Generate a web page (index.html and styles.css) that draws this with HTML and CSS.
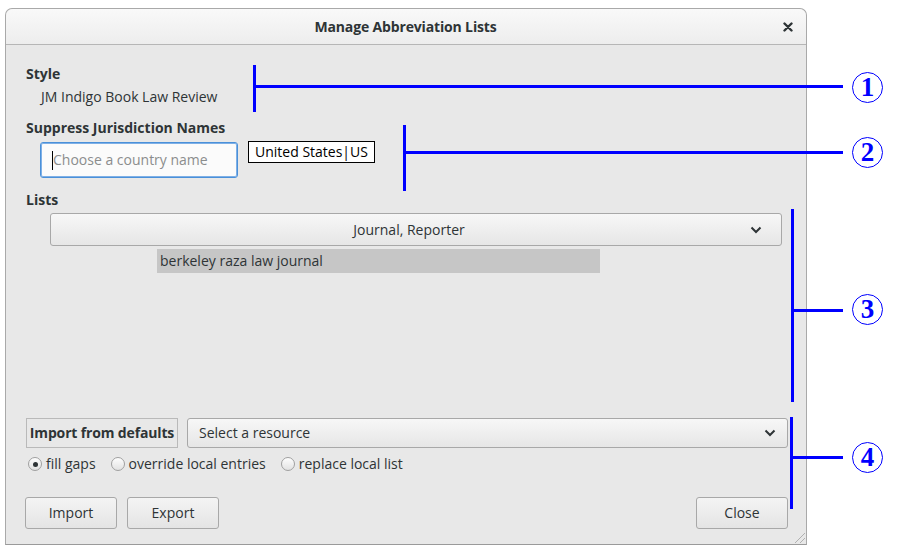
FILE: index.html
```html
<!DOCTYPE html>
<html>
<head>
<meta charset="utf-8">
<link rel="stylesheet" href="styles.css">
</head>
<body>
<div class="stage">
  <div class="dialog">
    <div class="titlebar">
      <span class="title">Manage Abbreviation Lists</span>
      <svg class="close" width="10" height="10" viewBox="0 0 10 10"><path d="M1.5 1.5 L8.5 8.5 M8.5 1.5 L1.5 8.5" stroke="#2e3436" stroke-width="2.4" stroke-linecap="round"/></svg>
    </div>
    <div class="content">
      <div class="label">Style</div>
      <div class="value">JM Indigo Book Law Review</div>
      <div class="label label-suppress">Suppress Jurisdiction Names</div>
      <div class="input-row">
        <div class="input"><span class="caret"></span><span class="placeholder">Choose a country name</span></div>
        <div class="tag">United States|US</div>
      </div>
      <div class="label label-lists">Lists</div>
      <div class="lists">
        <div class="dropdown">
          <span class="dd-text">Journal, Reporter</span>
          <svg class="chev" width="12" height="8" viewBox="0 0 12 8"><path d="M1.5 1.5 L6 6 L10.5 1.5" fill="none" stroke="#2e3436" stroke-width="2"/></svg>
        </div>
        <div class="list-item">berkeley raza law journal</div>
      </div>
      <div class="import-row">
        <div class="import-label">Import from defaults</div>
        <div class="select">
          <span>Select a resource</span>
          <svg class="chev" width="12" height="8" viewBox="0 0 12 8"><path d="M1.5 1.5 L6 6 L10.5 1.5" fill="none" stroke="#2e3436" stroke-width="2"/></svg>
        </div>
      </div>
      <div class="radio-row">
        <label class="radio"><span class="dot checked"></span>fill gaps</label>
        <label class="radio"><span class="dot"></span>override local entries</label>
        <label class="radio"><span class="dot"></span>replace local list</label>
      </div>
      <div class="button-row">
        <div class="btn">Import</div>
        <div class="btn">Export</div>
        <div class="spacer"></div>
        <div class="btn">Close</div>
      </div>
    </div>
    <svg class="grip" width="14" height="14" viewBox="0 0 14 14"><path d="M13 3 L3 13 M13 8 L8 13" stroke="#b0b0b0" stroke-width="1"/></svg>
  </div>

  <div class="ann a1-v"></div><div class="ann a1-h"></div><div class="num n1">1</div>
  <div class="ann a2-v"></div><div class="ann a2-h"></div><div class="num n2">2</div>
  <div class="ann a3-v"></div><div class="ann a3-h"></div><div class="num n3">3</div>
  <div class="ann a4-v"></div><div class="ann a4-h"></div><div class="num n4">4</div>
</div>
</body>
</html>
```
FILE: styles.css
```css
html, body {
  margin: 0;
  padding: 0;
  background: #ffffff;
}
body {
  font-family: "Open Sans", "Noto Sans", sans-serif;
  font-size: 14px;
  line-height: 18px;
  color: #2e3436;
}
.stage {
  position: relative;
  width: 900px;
  height: 558px;
  padding: 8px 0 0 5px;
  box-sizing: border-box;
}
.dialog {
  position: relative;
  width: 802px;
  height: 537px;
  box-sizing: border-box;
  border: 1px solid #a9a9a9;
  border-bottom-color: #9a9a9a;
  border-radius: 7px 7px 0 0;
  background: #e8e8e8;
  display: flex;
  flex-direction: column;
}
.titlebar {
  height: 35px;
  flex: none;
  border-bottom: 1px solid #b6b6b6;
  border-radius: 7px 7px 0 0;
  background: linear-gradient(#f9f9f9, #ededed);
  display: flex;
  align-items: center;
  justify-content: center;
  position: relative;
}
.title {
  font-weight: bold;
  font-size: 14px;
  letter-spacing: -0.15px;
  margin-left: -1px;
}
.close {
  position: absolute;
  right: 13px;
  top: 13px;
}
.content {
  flex: 1;
  display: flex;
  flex-direction: column;
  padding: 20px 17px 15px 20px;
}
.label {
  font-weight: bold;
}
.value {
  margin: 5px 0 0 15px;
}
.label-suppress {
  margin-top: 13px;
}
.input-row {
  display: flex;
  align-items: flex-start;
  margin: 5px 0 0 14px;
  gap: 10px;
}
.input {
  width: 198px;
  height: 36px;
  box-sizing: border-box;
  border: 1px solid #4a90d9;
  box-shadow: inset 0 0 0 1px #7fb0e6;
  border-radius: 3px;
  background: #fbfbfb;
  display: flex;
  align-items: center;
  padding-left: 11px;
}
.caret {
  width: 1px;
  height: 19px;
  background: #000;
}
.placeholder {
  color: #8b8d8d;
}
.tag {
  margin-top: -1px;
  height: 22px;
  box-sizing: border-box;
  border: 1px solid #000;
  background: #fff;
  padding: 0 6px 0 6px;
  color: #000;
  line-height: 20px;
}
.label-lists {
  margin-top: 13px;
}
.lists {
  flex: 1;
  margin-top: 4px;
  display: flex;
  flex-direction: column;
}
.dropdown {
  margin-left: 24px;
  width: 732px;
  height: 33px;
  box-sizing: border-box;
  border: 1px solid #a8a8a8;
  border-radius: 3px;
  background: linear-gradient(#f7f7f7, #e6e6e6);
  display: flex;
  align-items: center;
  justify-content: center;
  padding-right: 14px;
  position: relative;
}
.dropdown .chev {
  position: absolute;
  right: 19px;
  top: 12px;
}
.list-item {
  margin: 3px 0 0 131px;
  width: 443px;
  height: 24px;
  background: #c6c6c6;
  line-height: 24px;
  padding-left: 3px;
  box-sizing: border-box;
}
.import-row {
  display: flex;
  gap: 9px;
  height: 30px;
}
.import-label {
  width: 152px;
  box-sizing: border-box;
  border: 1px solid #b9b9b9;
  font-weight: bold;
  letter-spacing: -0.15px;
  display: flex;
  align-items: center;
  justify-content: center;
  white-space: nowrap;
}
.select {
  width: 601px;
  box-sizing: border-box;
  border: 1px solid #a8a8a8;
  border-radius: 3px;
  background: linear-gradient(#f7f7f7, #e6e6e6);
  display: flex;
  align-items: center;
  justify-content: space-between;
  padding: 0 11px 0 11px;
}
.radio-row {
  display: flex;
  margin-top: 8px;
  height: 16px;
  align-items: center;
  gap: 15px;
  margin-left: 2px;
}
.radio {
  display: flex;
  align-items: center;
  gap: 4px;
}
.dot {
  width: 14px;
  height: 14px;
  box-sizing: border-box;
  border-radius: 50%;
  border: 1px solid #a0a0a0;
  background: linear-gradient(#fdfdfd, #e2e2e2);
  position: relative;
}
.dot.checked::after {
  content: "";
  position: absolute;
  left: 3.5px;
  top: 3.5px;
  width: 5px;
  height: 5px;
  border-radius: 50%;
  background: #2e3436;
}
.button-row {
  margin-top: 25px;
  margin-left: -1px;
  display: flex;
  gap: 10px;
}
.spacer {
  flex: 1;
}
.btn {
  width: 92px;
  height: 32px;
  box-sizing: border-box;
  border: 1px solid #a8a8a8;
  border-radius: 3px;
  background: linear-gradient(#f4f4f4, #e4e4e4);
  display: flex;
  align-items: center;
  justify-content: center;
}
.btn:last-child {
  margin-right: 1px;
}
.grip {
  position: absolute;
  right: 0;
  bottom: 0;
}

/* annotations */
.ann {
  position: absolute;
  background: #0000ff;
}
.a1-v { left: 253px; top: 65px; width: 3px; height: 47px; }
.a1-h { left: 256px; top: 85px; width: 587px; height: 3px; }
.a2-v { left: 403px; top: 125px; width: 3px; height: 66px; }
.a2-h { left: 406px; top: 151px; width: 437px; height: 3px; }
.a3-v { left: 791px; top: 209px; width: 3px; height: 193px; }
.a3-h { left: 794px; top: 309px; width: 49px; height: 3px; }
.a4-v { left: 790px; top: 417px; width: 3px; height: 92px; }
.a4-h { left: 793px; top: 456px; width: 50px; height: 3px; }
.num {
  position: absolute;
  width: 31px;
  height: 31px;
  box-sizing: border-box;
  border: 1.5px solid #0000ff;
  border-radius: 50%;
  color: #0000ff;
  font-family: "Liberation Serif", "DejaVu Serif", serif;
  font-weight: bold;
  font-size: 27px;
  line-height: 29px;
  text-align: center;
}
.n1 { left: 852px; top: 72px; }
.n2 { left: 852px; top: 137px; }
.n3 { left: 852px; top: 294px; }
.n4 { left: 852px; top: 442px; }
```
